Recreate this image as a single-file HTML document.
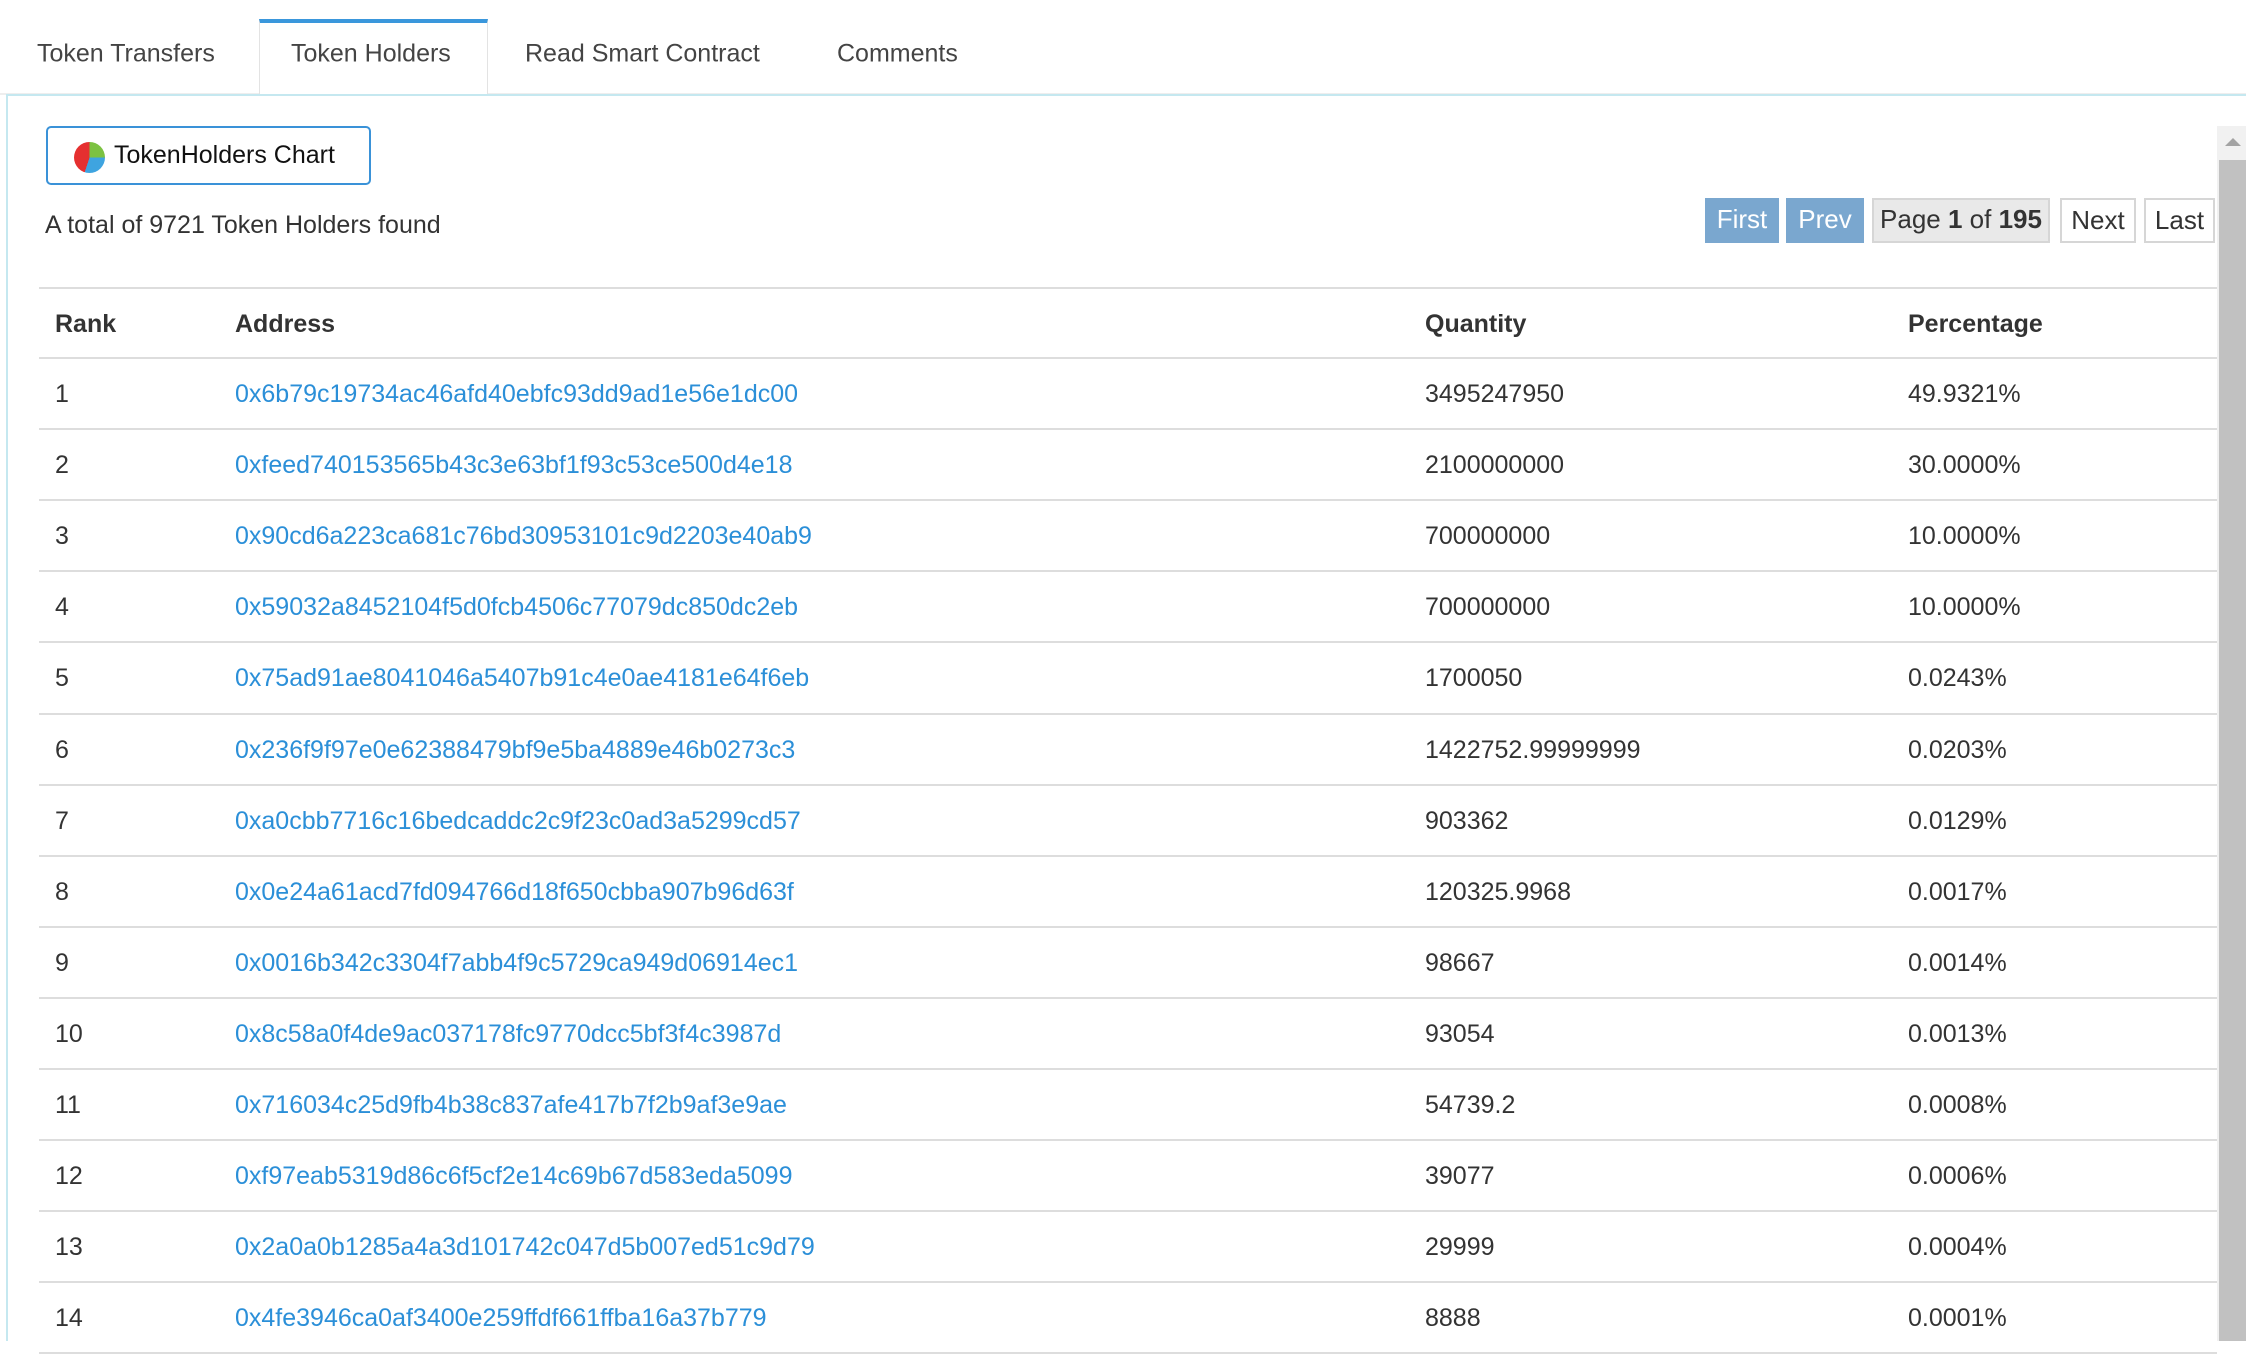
<!DOCTYPE html>
<html><head><meta charset="utf-8"><style>
*{margin:0;padding:0;box-sizing:border-box}
body{width:2246px;height:1341px;overflow:hidden;background:#fff;font-family:"Liberation Sans",Arial,sans-serif;color:#333;position:relative}
.a{position:absolute;white-space:nowrap}
.tab{position:absolute;top:54px;font-size:25px;color:#444;line-height:1;transform:translateY(-50%)}
.t{font-size:25px;line-height:1}
.lnk{color:#2b8fd8}
.hl{position:absolute;left:39px;width:2178px;height:2px;background:#ddd}
.pg{position:absolute;top:198px;height:45px;font-size:26px;line-height:43px;text-align:center}
</style></head><body>
<div class="a" style="left:0;top:93px;width:259px;height:2px;background:#eee"></div>
<div class="a" style="left:488px;top:93px;width:1758px;height:2px;background:#eee"></div>
<div class="a" style="left:259px;top:19px;width:229px;height:77px;border:1px solid #e3e3e3;border-bottom:none;border-top:4px solid #3a97dc;background:#fff"></div>
<div class="tab" style="left:37px">Token Transfers</div>
<div class="tab" style="left:291px">Token Holders</div>
<div class="tab" style="left:525px">Read Smart Contract</div>
<div class="tab" style="left:837px">Comments</div>
<div class="a" style="left:6px;top:94px;width:2240px;height:1247px;border-left:2px solid #c5e8f0;border-top:2px solid #c5e8f0"></div>
<div class="a" style="left:46px;top:126px;width:325px;height:59px;border:2px solid #3a92d8;border-radius:5px"></div>
<div class="a" style="left:74px;top:142px;width:31px;height:31px;border-radius:50%;background:conic-gradient(#7cc242 0 25%,#3ea4e0 25% 55%,#e53030 55% 100%)"></div>
<div class="a t" style="left:114px;top:143px;color:#111">TokenHolders Chart</div>
<div class="a t" style="left:45px;top:213px">A total of 9721 Token Holders found</div>
<div class="pg" style="left:1705px;width:74px;background:#7aa7cf;color:#fff">First</div>
<div class="pg" style="left:1786px;width:78px;background:#7aa7cf;color:#fff">Prev</div>
<div class="pg" style="left:1872px;width:178px;background:#e9e9e9;border:2px solid #d6d6d6;line-height:39px">Page <b>1</b> of <b>195</b></div>
<div class="pg" style="left:2060px;width:76px;border:2px solid #d6d6d6;line-height:41px">Next</div>
<div class="pg" style="left:2144px;width:71px;border:2px solid #d6d6d6;line-height:41px">Last</div>
<div class="hl" style="top:287px"></div>
<div class="hl" style="top:357px"></div>
<div class="a t" style="left:55px;top:312px;font-weight:bold">Rank</div>
<div class="a t" style="left:235px;top:312px;font-weight:bold">Address</div>
<div class="a t" style="left:1425px;top:312px;font-weight:bold">Quantity</div>
<div class="a t" style="left:1908px;top:312px;font-weight:bold">Percentage</div>
<div id="rows"></div>
<div class="a" style="left:2217px;top:126px;width:29px;height:1215px;background:#f1f1f1"></div>
<div class="a" style="left:2219px;top:160px;width:27px;height:1181px;background:#c1c1c1"></div>
<div class="a" style="left:2225px;top:138px;width:0;height:0;border-left:8px solid transparent;border-right:8px solid transparent;border-bottom:8px solid #a3a3a3"></div>
<script>
var d=[["0x6b79c19734ac46afd40ebfc93dd9ad1e56e1dc00","3495247950","49.9321%"],
["0xfeed740153565b43c3e63bf1f93c53ce500d4e18","2100000000","30.0000%"],
["0x90cd6a223ca681c76bd30953101c9d2203e40ab9","700000000","10.0000%"],
["0x59032a8452104f5d0fcb4506c77079dc850dc2eb","700000000","10.0000%"],
["0x75ad91ae8041046a5407b91c4e0ae4181e64f6eb","1700050","0.0243%"],
["0x236f9f97e0e62388479bf9e5ba4889e46b0273c3","1422752.99999999","0.0203%"],
["0xa0cbb7716c16bedcaddc2c9f23c0ad3a5299cd57","903362","0.0129%"],
["0x0e24a61acd7fd094766d18f650cbba907b96d63f","120325.9968","0.0017%"],
["0x0016b342c3304f7abb4f9c5729ca949d06914ec1","98667","0.0014%"],
["0x8c58a0f4de9ac037178fc9770dcc5bf3f4c3987d","93054","0.0013%"],
["0x716034c25d9fb4b38c837afe417b7f2b9af3e9ae","54739.2","0.0008%"],
["0xf97eab5319d86c6f5cf2e14c69b67d583eda5099","39077","0.0006%"],
["0x2a0a0b1285a4a3d101742c047d5b007ed51c9d79","29999","0.0004%"],
["0x4fe3946ca0af3400e259ffdf661ffba16a37b779","8888","0.0001%"]];
var h="";
for(var i=0;i<d.length;i++){var y=357+i*71.1;var ty=y+25;
h+='<div class="a t" style="left:55px;top:'+ty+'px">'+(i+1)+'</div>';
h+='<div class="a t lnk" style="left:235px;top:'+ty+'px">'+d[i][0]+'</div>';
h+='<div class="a t" style="left:1425px;top:'+ty+'px">'+d[i][1]+'</div>';
h+='<div class="a t" style="left:1908px;top:'+ty+'px">'+d[i][2]+'</div>';
h+='<div class="hl" style="top:'+(y+71.1)+'px"></div>';}
document.getElementById("rows").innerHTML=h;
</script>
</body></html>
